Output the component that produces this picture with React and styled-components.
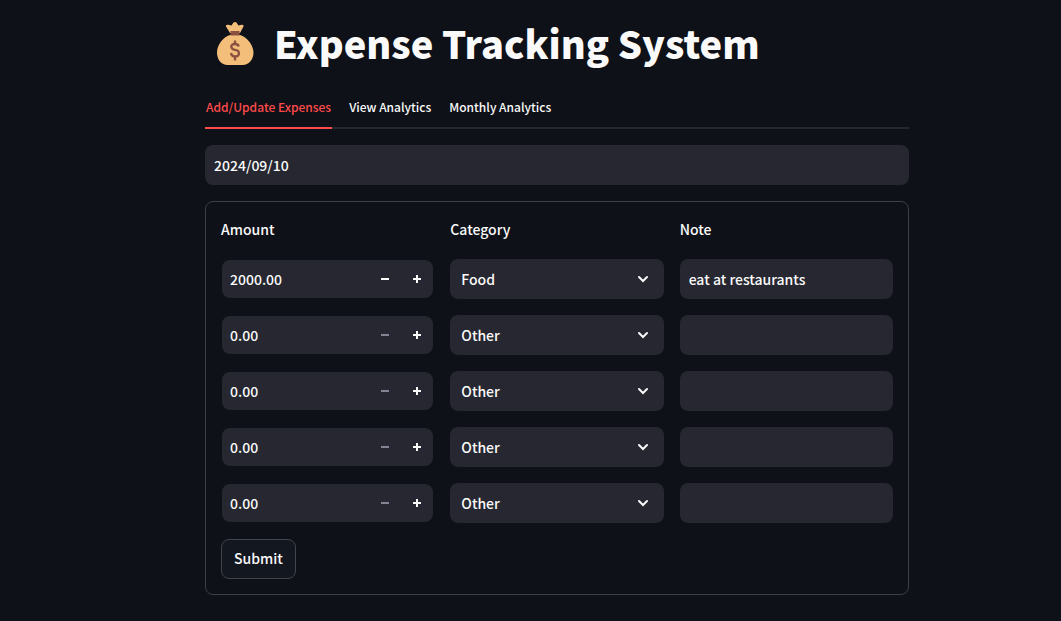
import React, { useState } from "react";
import styled, { createGlobalStyle } from "styled-components";

const GlobalStyle = createGlobalStyle`
  *, *::before, *::after { box-sizing: border-box; }
  body {
    margin: 0;
    background: #0e1117;
    color: #fafafa;
    font-family: "Source Sans Pro", "Noto Sans CJK SC", "Noto Sans", sans-serif;
    font-size: 14px;
    font-weight: 500;
    line-height: 24px;
  }
  input, select, button { font: inherit; color: inherit; }
`;

const Main = styled.main`
  padding: 16px 152px 24px 205px;
`;

const Title = styled.h1`
  display: flex;
  align-items: flex-start;
  gap: 14px;
  margin: 0;
  height: 56px;
  font-size: 38px;
  font-weight: 800;
  line-height: 54px;
  white-space: nowrap;
`;

const BagIcon = styled.svg`
  flex: none;
  width: 55px;
  height: 56px;
`;

const TabList = styled.div`
  display: flex;
  gap: 16px;
  height: 41px;
  margin-top: 16px;
  box-shadow: inset 0 -2px #262730;
`;

const Tab = styled.button`
  height: 41px;
  padding: 0 1px 2px;
  border: 0;
  border-bottom: 2px solid ${(p) => (p.$active ? "#ff4b4b" : "transparent")};
  background: none;
  color: ${(p) => (p.$active ? "#ff4b4b" : "#fafafa")};
  font-size: 12px;
  white-space: nowrap;
  cursor: pointer;
`;

const TextField = styled.input`
  display: block;
  width: 100%;
  min-width: 0;
  height: 40px;
  padding: 0 9px;
  border: 0;
  border-radius: 8px;
  background: #262730;
  outline: none;
`;

const DateField = styled(TextField)`
  margin: 16px 0;
`;

const Form = styled.form`
  display: flex;
  flex-direction: column;
  align-items: stretch;
  gap: 16px;
  padding: 15px;
  border: 1px solid #3d3f44;
  border-radius: 8px;
`;

const Row = styled.div`
  display: grid;
  grid-template-columns: repeat(3, minmax(0, 1fr));
  gap: 16px;
`;

const ColumnLabel = styled.div`
  height: 26px;
`;

const NumberBox = styled.div`
  display: flex;
  height: 38px;
  margin: 1px;
  border-radius: 8px;
  background: #262730;
  overflow: hidden;
`;

const NumberField = styled.input`
  flex: 1;
  min-width: 0;
  padding: 0 8px;
  border: 0;
  background: none;
  outline: none;
  appearance: textfield;
  &::-webkit-inner-spin-button,
  &::-webkit-outer-spin-button { appearance: none; margin: 0; }
`;

const StepButton = styled.button`
  display: grid;
  place-items: center;
  width: 32px;
  padding: 0;
  border: 0;
  background: none;
  cursor: pointer;
  &:disabled { color: #808495; cursor: not-allowed; }
`;

const SelectBox = styled.div`
  display: grid;
  align-items: center;
  > * { grid-area: 1 / 1; }
`;

const SelectField = styled.select`
  width: 100%;
  height: 40px;
  padding: 0 40px 0 11px;
  border: 0;
  border-radius: 8px;
  background: #262730;
  appearance: none;
  outline: none;
`;

const Chevron = styled.svg`
  justify-self: end;
  width: 16px;
  height: 16px;
  margin-right: 13px;
  pointer-events: none;
`;

const SubmitButton = styled.button`
  align-self: flex-start;
  height: 40px;
  padding: 0 12px 2px;
  border: 1px solid #41444c;
  border-radius: 8px;
  background: #131720;
  cursor: pointer;
`;

const TABS = ["Add/Update Expenses", "View Analytics", "Monthly Analytics"];
const CATEGORIES = ["Rent", "Food", "Shopping", "Entertainment", "Other"];
const EXPENSES = [
  { amount: 2000, category: "Food", note: "eat at restaurants" },
  { amount: 0, category: "Other", note: "" },
  { amount: 0, category: "Other", note: "" },
  { amount: 0, category: "Other", note: "" },
  { amount: 0, category: "Other", note: "" },
];

function MoneyBag() {
  return (
    <BagIcon viewBox="0 0 55 56" aria-hidden="true">
      <path
        fill="#f3be7a"
        d="M25 17 21 10.500Q20.500 8.300 23 8.800L26.500 9.500 28 7.200Q30 4.600 32 7.200L33.500 9.500 36.500 8.800Q39 8.300 38.500 10.500L35 17ZM25 19H35C42 21 48.500 29 48.500 36.500C48.500 44 43.500 49 38 49H22.500C16.500 49 12 44 12 36.500C12 29 18 21 25 19Z"
      />
      <path fill="#8a5142" d="M26 15H34.500V19.500H25.500V15Z" />
      <path
        fill="none"
        stroke="#8a5142"
        strokeWidth="2.300"
        d="M33.800 30.500Q33 28 30 28C24.500 28 25.500 33 30 33.800C35.500 34.600 35 40.500 30 40.500Q26.500 40.500 26 37M30 24.500V28.500M30 40.500V44.500"
      />
    </BagIcon>
  );
}

function AmountInput({ initial, label }) {
  const [value, setValue] = useState(initial.toFixed(2));
  const amount = Number(value);
  const step = (by) => setValue(Math.max(0, amount + by).toFixed(2));
  return (
    <NumberBox>
      <NumberField
        type="number"
        aria-label={label}
        min="0"
        step="0.01"
        value={value}
        onChange={(e) => setValue(e.target.value)}
      />
      <StepButton type="button" aria-label="Decrease" disabled={amount <= 0} onClick={() => step(-1)}>
        <svg width="8" height="8" aria-hidden="true">
          <path fill="currentColor" d="M0 3h8v2H0z" />
        </svg>
      </StepButton>
      <StepButton type="button" aria-label="Increase" onClick={() => step(1)}>
        <svg width="8" height="8" aria-hidden="true">
          <path fill="currentColor" d="M3 0h2v3h3v2H5v3H3V5H0V3h3z" />
        </svg>
      </StepButton>
    </NumberBox>
  );
}

function ExpenseRow({ expense, number }) {
  return (
    <Row>
      <AmountInput initial={expense.amount} label={`Amount ${number}`} />
      <SelectBox>
        <SelectField aria-label={`Category ${number}`} defaultValue={expense.category}>
          {CATEGORIES.map((c) => (
            <option key={c}>{c}</option>
          ))}
        </SelectField>
        <Chevron viewBox="0 0 16 16" aria-hidden="true">
          <path
            d="M4 6 8 10 12 6"
            fill="none"
            stroke="#fafafa"
            strokeWidth="2"
            strokeLinecap="round"
          />
        </Chevron>
      </SelectBox>
      <TextField type="text" aria-label={`Note ${number}`} defaultValue={expense.note} />
    </Row>
  );
}

export default function App() {
  const [active, setActive] = useState(0);
  return (
    <>
      <GlobalStyle />
      <Main>
        <Title>
          <MoneyBag />
          Expense Tracking System
        </Title>
        <TabList role="tablist">
          {TABS.map((tab, i) => (
            <Tab
              key={tab}
              type="button"
              role="tab"
              aria-selected={i === active}
              $active={i === active}
              onClick={() => setActive(i)}
            >
              {tab}
            </Tab>
          ))}
        </TabList>
        <DateField type="text" aria-label="Date" defaultValue="2024/09/10" />
        <Form onSubmit={(e) => e.preventDefault()}>
          <Row>
            <ColumnLabel>Amount</ColumnLabel>
            <ColumnLabel>Category</ColumnLabel>
            <ColumnLabel>Note</ColumnLabel>
          </Row>
          {EXPENSES.map((expense, i) => (
            <ExpenseRow key={i} expense={expense} number={i + 1} />
          ))}
          <SubmitButton type="submit">Submit</SubmitButton>
        </Form>
      </Main>
    </>
  );
}
